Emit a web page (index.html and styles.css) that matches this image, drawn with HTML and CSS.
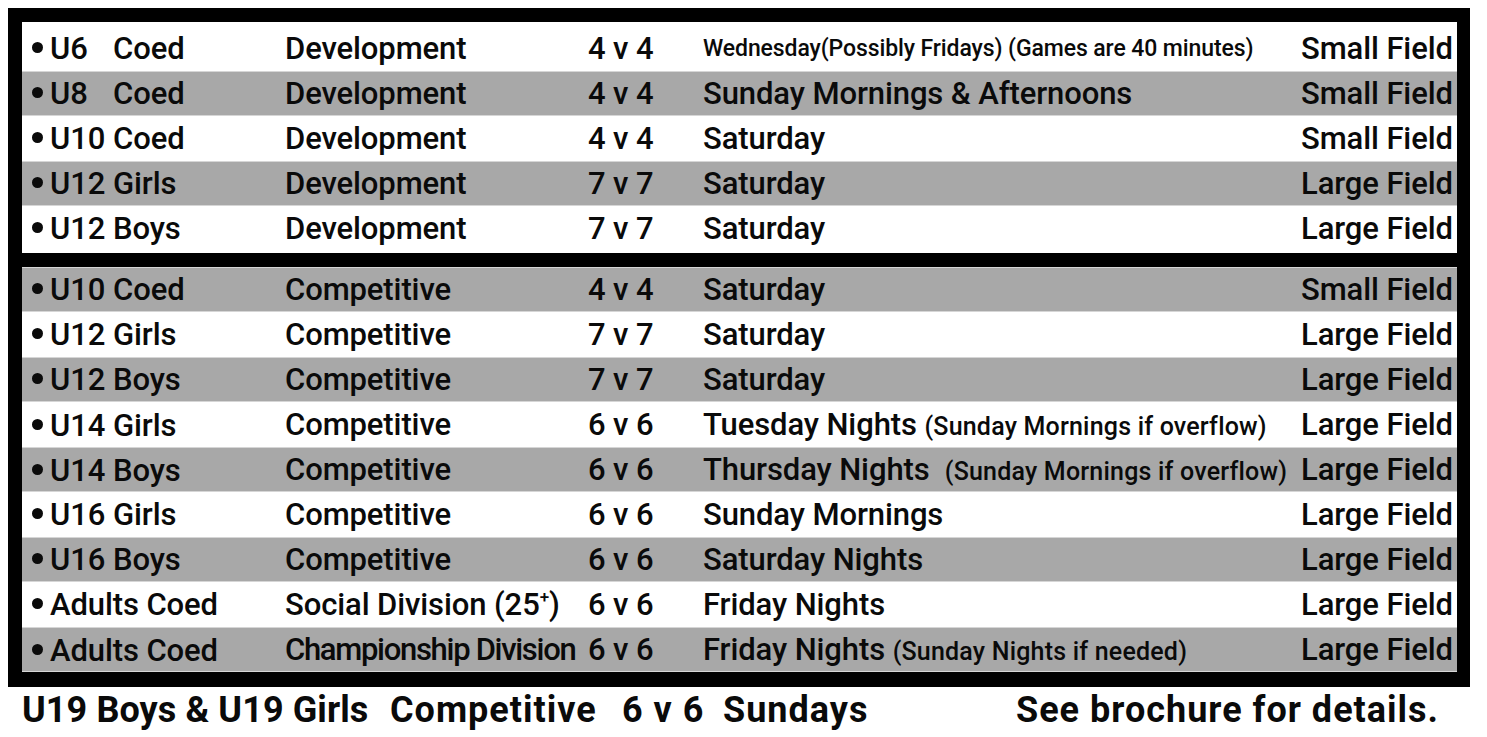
FILE: index.html
```html
<!DOCTYPE html>
<html>
<head>
<meta charset="utf-8">
<link rel="stylesheet" href="styles.css">
</head>
<body>
<div class="frame">
  <div class="group group-dev">
    <div class="row white"><div class="c1"><span class="bul"></span><span class="age">U6</span><span>Coed</span></div><div class="c2">Development</div><div class="c3">4 v 4</div><div class="c4 small">Wednesday(Possibly Fridays) (Games are 40 minutes)</div><div class="c5">Small Field</div></div>
    <div class="row gray"><div class="c1"><span class="bul"></span><span class="age">U8</span><span>Coed</span></div><div class="c2">Development</div><div class="c3">4 v 4</div><div class="c4">Sunday Mornings &amp; Afternoons</div><div class="c5">Small Field</div></div>
    <div class="row white"><div class="c1"><span class="bul"></span><span class="age">U10</span><span>Coed</span></div><div class="c2">Development</div><div class="c3">4 v 4</div><div class="c4">Saturday</div><div class="c5">Small Field</div></div>
    <div class="row gray"><div class="c1"><span class="bul"></span><span class="age">U12</span><span>Girls</span></div><div class="c2">Development</div><div class="c3">7 v 7</div><div class="c4">Saturday</div><div class="c5">Large Field</div></div>
    <div class="row white"><div class="c1"><span class="bul"></span><span class="age">U12</span><span>Boys</span></div><div class="c2">Development</div><div class="c3">7 v 7</div><div class="c4">Saturday</div><div class="c5">Large Field</div></div>
  </div>
  <div class="divider"></div>
  <div class="group">
    <div class="row gray"><div class="c1"><span class="bul"></span><span class="age">U10</span><span>Coed</span></div><div class="c2">Competitive</div><div class="c3">4 v 4</div><div class="c4">Saturday</div><div class="c5">Small Field</div></div>
    <div class="row white"><div class="c1"><span class="bul"></span><span class="age">U12</span><span>Girls</span></div><div class="c2">Competitive</div><div class="c3">7 v 7</div><div class="c4">Saturday</div><div class="c5">Large Field</div></div>
    <div class="row gray"><div class="c1"><span class="bul"></span><span class="age">U12</span><span>Boys</span></div><div class="c2">Competitive</div><div class="c3">7 v 7</div><div class="c4">Saturday</div><div class="c5">Large Field</div></div>
    <div class="row white"><div class="c1"><span class="bul"></span><span class="age">U14</span><span>Girls</span></div><div class="c2">Competitive</div><div class="c3">6 v 6</div><div class="c4">Tuesday Nights <span class="note">(Sunday Mornings if overflow)</span></div><div class="c5">Large Field</div></div>
    <div class="row gray"><div class="c1"><span class="bul"></span><span class="age">U14</span><span>Boys</span></div><div class="c2">Competitive</div><div class="c3">6 v 6</div><div class="c4">Thursday Nights&nbsp; <span class="note">(Sunday Mornings if overflow)</span></div><div class="c5">Large Field</div></div>
    <div class="row white"><div class="c1"><span class="bul"></span><span class="age">U16</span><span>Girls</span></div><div class="c2">Competitive</div><div class="c3">6 v 6</div><div class="c4">Sunday Mornings</div><div class="c5">Large Field</div></div>
    <div class="row gray"><div class="c1"><span class="bul"></span><span class="age">U16</span><span>Boys</span></div><div class="c2">Competitive</div><div class="c3">6 v 6</div><div class="c4">Saturday Nights</div><div class="c5">Large Field</div></div>
    <div class="row white"><div class="c1"><span class="bul"></span><span>Adults Coed</span></div><div class="c2">Social Division (25<sup class="sup">+</sup>)</div><div class="c3">6 v 6</div><div class="c4">Friday Nights</div><div class="c5">Large Field</div></div>
    <div class="row gray"><div class="c1"><span class="bul"></span><span>Adults Coed</span></div><div class="c2 tight">Championship Division</div><div class="c3">6 v 6</div><div class="c4">Friday Nights <span class="note">(Sunday Nights if needed)</span></div><div class="c5">Large Field</div></div>
  </div>
</div>
<div class="footer">
  <span class="f-first">U19 Boys &amp; U19 Girls</span>
  <span>Competitive</span>
  <span>6 v 6</span>
  <span>Sundays</span>
  <span>See brochure for details.</span>
</div>
</body>
</html>
```
FILE: styles.css
```css
html, body {
  margin: 0;
  padding: 0;
  background: #ffffff;
}
body {
  font-family: Roboto, "Liberation Sans", sans-serif;
  color: #0a0a0a;
}
.frame {
  margin: 8px 0 0 8px;
  width: 1435px;
  border-style: solid;
  border-color: #000;
  border-width: 14px 13px 15px 14px;
  background: #000;
}
.group {
  display: flex;
  flex-direction: column;
}
.group-dev {
  background: #fff;
  padding: 4px 0 2px;
}
.divider {
  height: 14px;
  background: #000;
}
.row {
  display: grid;
  grid-template-columns: 253px 303px 115px 598px 1fr;
  padding-left: 10px;
  height: 45px;
  line-height: 45px;
  font-size: 31px;
  font-weight: 500;
  letter-spacing: -0.1px;
  white-space: nowrap;
  box-sizing: border-box;
}
.white { background: #ffffff; }
.gray {
  background: #a8a8a8;
  box-shadow: inset 0 1px 0 #d6d6d6, inset 0 -1px 0 #d6d6d6;
}
.c1 { display: flex; align-items: center; }
.bul {
  width: 11px;
  height: 11px;
  border-radius: 50%;
  background: #0a0a0a;
  margin-top: -2px;
  margin-right: 7px;
  flex: none;
}
.age { width: 63px; }
.small { font-size: 23px; letter-spacing: -0.1px; }
.note { font-size: 25px; letter-spacing: 0.2px; }
.tight { letter-spacing: -1.3px; }
.sup { font-size: 17px; line-height: 0; vertical-align: 12px; }
.footer {
  display: grid;
  grid-template-columns: 368px 232px 101px 293px auto;
  padding-left: 22px;
  font-size: 36px;
  font-weight: 700;
  line-height: 46px;
  letter-spacing: 1px;
  white-space: nowrap;
}
.f-first {
  letter-spacing: 0.1px;
}
```
